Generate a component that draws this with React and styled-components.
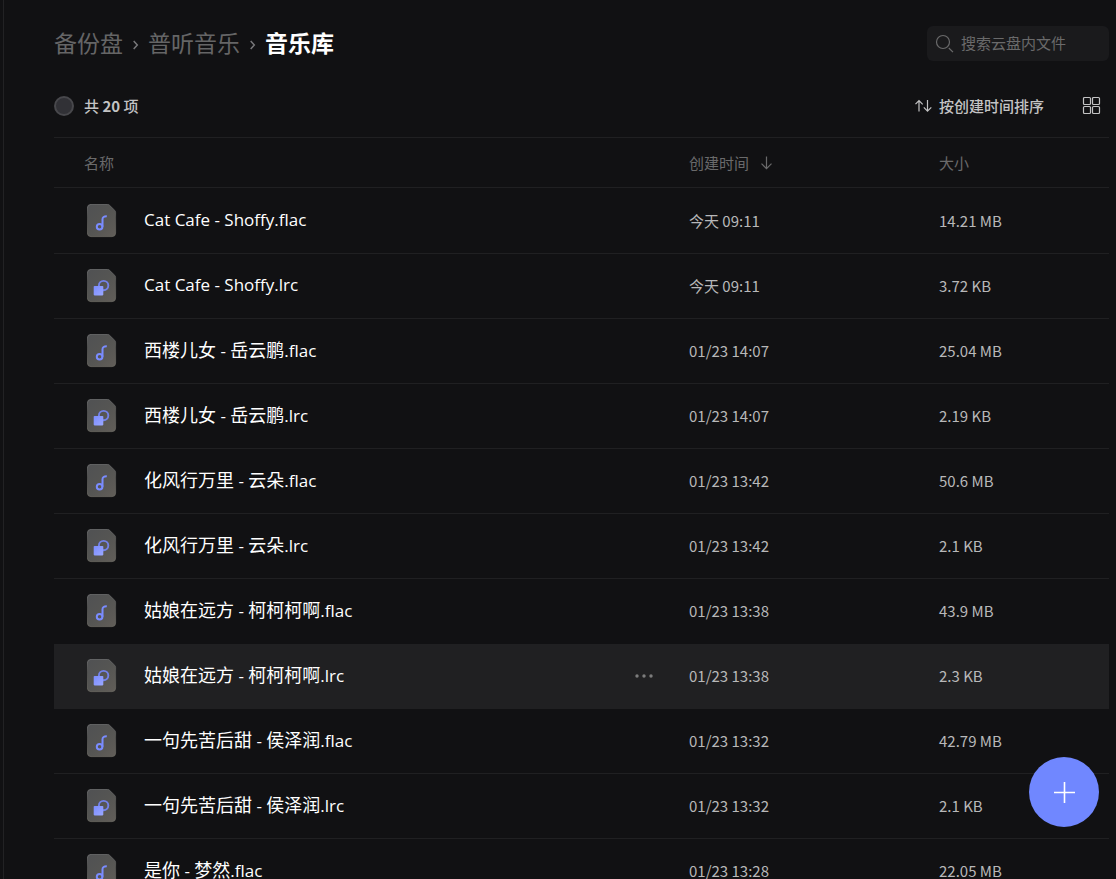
import React from "react";
import styled, { createGlobalStyle } from "styled-components";

const GlobalStyle = createGlobalStyle`
  *, *::before, *::after { box-sizing: border-box; }
  body {
    margin: 0;
    background: #111113;
    color: #fff;
    font-family: "Noto Sans CJK SC", sans-serif;
    font-size: 15px;
    overflow: hidden;
  }
  button, input { font: inherit; color: inherit; }
  button { padding: 0; border: 0; background: none; cursor: pointer; }
`;

const Page = styled.main`
  height: 100vh;
  margin-left: 3px;
  padding: 26px 7px 0 50px;
  border-left: 1px solid #222224;
  overflow: hidden;
`;

const Header = styled.header`
  display: flex;
  align-items: center;
  justify-content: space-between;
  height: 35px;
`;

const Breadcrumb = styled.nav`
  display: flex;
  align-items: center;
  gap: 8px;
  padding-bottom: 4px;
  font-size: 23px;
  line-height: 34px;
  color: #656566;
`;

const Crumb = styled.a`
  color: ${(p) => (p.$current ? "#fff" : "inherit")};
  font-weight: ${(p) => (p.$current ? 700 : 400)};
  text-decoration: none;
`;

const Chevron = styled.svg`
  width: 9px;
  height: 12px;
  margin-top: 6px;
`;

const SearchBox = styled.label`
  display: flex;
  align-items: center;
  gap: 6px;
  width: 182px;
  height: 35px;
  padding: 0 8px;
  border-radius: 6px;
  background: #1a1a1c;
  color: #6a6a6b;
`;

const SearchInput = styled.input`
  flex: 1;
  min-width: 0;
  padding: 0 0 2px;
  border: 0;
  outline: 0;
  background: none;
  &::placeholder { color: #6a6a6b; opacity: 1; }
`;

const Toolbar = styled.div`
  display: flex;
  align-items: center;
  height: 62px;
  margin-top: 14px;
  color: #c3c3c4;
`;

const ToolbarText = styled.span`
  padding-bottom: 2px;
  font-weight: 500;
  b { font-weight: 700; }
`;

const SelectAll = styled.label`
  display: flex;
  align-items: center;
  gap: 10px;
`;

const RoundCheck = styled.input`
  appearance: none;
  width: 20px;
  height: 20px;
  margin: 0;
  border: 2px solid #48484c;
  border-radius: 50%;
  background: #313136;
`;

const SortButton = styled.button`
  display: flex;
  align-items: center;
  gap: 6px;
  margin: 0 38px 0 auto;
`;

const ViewButton = styled.button`
  display: flex;
  margin-right: 8px;
  padding-bottom: 2px;
`;

const Table = styled.table`
  width: 100%;
  table-layout: fixed;
  border-collapse: separate;
  border-spacing: 0;
  border-top: 1px solid #202022;
`;

const HeadCell = styled.th`
  width: ${(p) => p.$width || "auto"};
  height: 50px;
  padding: 0 0 0 ${(p) => p.$indent || "0"};
  border-bottom: 1px solid #202022;
  color: #6a6a6b;
  font-weight: 400;
  text-align: left;
`;

const SortHeader = styled.button`
  display: flex;
  align-items: center;
  gap: 11px;
`;

const Row = styled.tr`
  background: ${(p) => (p.$active ? "#202022" : "transparent")};
  > td { border-bottom: 1px solid ${(p) => (p.$plain ? "transparent" : "#202022")}; }
`;

const Cell = styled.td`
  height: 65px;
  padding: 0 0 2px;
  color: #b8b8b9;
  white-space: nowrap;
`;

const NameCell = styled(Cell)`
  padding: 0 35px 0 33px;
`;

const NameLine = styled.div`
  display: flex;
  align-items: center;
`;

const FileName = styled.a`
  margin-left: 27px;
  padding-bottom: 2px;
  color: #fff;
  font-family: "Open Sans", "Noto Sans CJK SC", sans-serif;
  font-size: 17px;
  line-height: 26px;
  text-decoration: none;
`;

const Han = styled.span`
  font-size: 18px;
`;

const MoreButton = styled.button`
  display: flex;
  margin-left: auto;
  color: #7c7c7d;
`;

const TableBody = styled.tbody`
  &::before { content: ""; display: table-row; height: 1px; }
`;

const AddButton = styled.button`
  position: fixed;
  right: 17px;
  bottom: 52px;
  display: flex;
  align-items: center;
  justify-content: center;
  width: 70px;
  height: 70px;
  border-radius: 50%;
  background: #7087ff;
`;

const FileSvg = styled.svg`
  flex: none;
  width: 30px;
  height: 34px;
`;

const files = [
  ["Cat Cafe - Shoffy.flac", "今天 09:11", "14.21 MB"],
  ["Cat Cafe - Shoffy.lrc", "今天 09:11", "3.72 KB"],
  ["西楼儿女 - 岳云鹏.flac", "01/23 14:07", "25.04 MB"],
  ["西楼儿女 - 岳云鹏.lrc", "01/23 14:07", "2.19 KB"],
  ["化风行万里 - 云朵.flac", "01/23 13:42", "50.6 MB"],
  ["化风行万里 - 云朵.lrc", "01/23 13:42", "2.1 KB"],
  ["姑娘在远方 - 柯柯柯啊.flac", "01/23 13:38", "43.9 MB"],
  ["姑娘在远方 - 柯柯柯啊.lrc", "01/23 13:38", "2.3 KB"],
  ["一句先苦后甜 - 侯泽润.flac", "01/23 13:32", "42.79 MB"],
  ["一句先苦后甜 - 侯泽润.lrc", "01/23 13:32", "2.1 KB"],
  ["是你 - 梦然.flac", "01/23 13:28", "22.05 MB"],
];
const activeIndex = 7;

// Han characters are set one size larger than the Latin ones beside them.
function MixedText({ children }) {
  return children
    .split(/(\p{Script=Han}+)/u)
    .map((run, i) => (i % 2 ? <Han key={i}>{run}</Han> : run));
}

function Separator() {
  return (
    <Chevron viewBox="0 0 9 12" fill="none" stroke="#77777a" strokeWidth="1.5" aria-hidden="true">
      <path d="M2.700 2 6.300 6 2.700 10" />
    </Chevron>
  );
}

function IconDefs() {
  return (
    <svg width="0" height="0" aria-hidden="true">
      <defs>
        <linearGradient id="sheet" x1="0" y1="0" x2="1" y2="1">
          <stop offset="0" stopColor="#505153" />
          <stop offset="0.5" stopColor="#555553" />
          <stop offset="1" stopColor="#625e59" />
        </linearGradient>
        <linearGradient id="sheetEdge" x1="0" y1="0" x2="0" y2="1">
          <stop offset="0" stopColor="#737475" />
          <stop offset="0.4" stopColor="#555553" />
          <stop offset="1" stopColor="#6b6962" />
        </linearGradient>
        <linearGradient id="square" x1="0" y1="0" x2="1" y2="1">
          <stop offset="0" stopColor="#7c8cff" />
          <stop offset="1" stopColor="#9aa8ff" />
        </linearGradient>
      </defs>
    </svg>
  );
}

function FileIcon({ audio }) {
  return (
    <FileSvg viewBox="0 0 30 34" fill="none" aria-hidden="true">
      <path
        d="M4 .4H20.500q1.100 0 1.900.8l5.400 5.200q.8.8.8 2V29q0 3.600-3.600 3.600H4Q.4 32.600.4 29V4Q.4.4 4 .4Z"
        fill="url(#sheet)"
        stroke="url(#sheetEdge)"
        strokeWidth="0.8"
      />
      {audio ? (
        <g stroke="#7a8cff" strokeWidth="2">
          <circle cx="12.600" cy="22.800" r="2.800" />
          <path d="M15.500 22.800V15.200q0-3 4.300-2.900" />
        </g>
      ) : (
        <g>
          <circle cx="16.600" cy="16.600" r="4.700" stroke="#7482e8" strokeWidth="1.900" />
          <rect x="6.700" y="17" width="9.600" height="9.400" rx="0.800" fill="url(#square)" />
        </g>
      )}
    </FileSvg>
  );
}

export default function App() {
  return (
    <>
      <GlobalStyle />
      <Page>
        <Header>
          <Breadcrumb aria-label="路径">
            <Crumb href="#backup">备份盘</Crumb>
            <Separator />
            <Crumb href="#music">普听音乐</Crumb>
            <Separator />
            <Crumb href="#library" $current aria-current="page">音乐库</Crumb>
          </Breadcrumb>
          <SearchBox>
            <svg width="20" height="20" viewBox="0 0 20 20" fill="none" stroke="currentColor" strokeWidth="1.2" aria-hidden="true">
              <circle cx="8" cy="8" r="6.500" />
              <path d="m13.800 14 4.200 4.200" />
            </svg>
            <SearchInput type="search" placeholder="搜索云盘内文件" aria-label="搜索云盘内文件" />
          </SearchBox>
        </Header>

        <Toolbar>
          <SelectAll>
            <RoundCheck type="checkbox" />
            <ToolbarText>共 <b>20</b> 项</ToolbarText>
          </SelectAll>
          <SortButton type="button">
            <svg width="18" height="14" viewBox="0 0 18 14" fill="none" stroke="currentColor" strokeWidth="1.2" aria-hidden="true">
              <path d="M4 12.500V1.500M.5 5.200 4 1.500l3.700 3.800M12.500 1v11.200M8.800 8.400l3.700 3.800 3.800-3.800" />
            </svg>
            <ToolbarText>按创建时间排序</ToolbarText>
          </SortButton>
          <ViewButton type="button" aria-label="网格视图">
            <svg width="19" height="19" viewBox="0 0 19 19" fill="none" stroke="currentColor" strokeWidth="1.200" aria-hidden="true">
              <rect x="1.500" y="1.500" width="7" height="7" rx="1" />
              <rect x="10.500" y="1.500" width="7" height="7" rx="1" />
              <rect x="1.500" y="10.500" width="7" height="7" rx="1" />
              <rect x="10.500" y="10.500" width="7" height="7" rx="1" />
            </svg>
          </ViewButton>
        </Toolbar>

        <Table>
          <thead>
            <tr>
              <HeadCell scope="col" $indent="30px">名称</HeadCell>
              <HeadCell scope="col" $width="250px">
                <SortHeader type="button">
                  创建时间
                  <svg width="13" height="14" viewBox="0 0 13 14" fill="none" stroke="currentColor" strokeWidth="1.200" aria-hidden="true">
                    <path d="M6.500.5v12.200M1.500 7.700l5 5 5-5" />
                  </svg>
                </SortHeader>
              </HeadCell>
              <HeadCell scope="col" $width="170px">大小</HeadCell>
            </tr>
          </thead>
          <TableBody>
            {files.map(([name, time, size], i) => (
              <Row key={name} $active={i === activeIndex} $plain={i === activeIndex || i === activeIndex - 1}>
                <NameCell>
                  <NameLine>
                    <FileIcon audio={name.endsWith(".flac")} />
                    <FileName href="#file"><MixedText>{name}</MixedText></FileName>
                    {i === activeIndex && (
                      <MoreButton type="button" aria-label="更多">
                        <svg width="20" height="6" viewBox="0 0 20 6" fill="currentColor" aria-hidden="true">
                          <circle cx="3" cy="3" r="1.700" />
                          <circle cx="10" cy="3" r="1.700" />
                          <circle cx="17" cy="3" r="1.700" />
                        </svg>
                      </MoreButton>
                    )}
                  </NameLine>
                </NameCell>
                <Cell>{time}</Cell>
                <Cell>{size}</Cell>
              </Row>
            ))}
          </TableBody>
        </Table>
      </Page>
      <AddButton type="button" aria-label="添加">
        <svg width="22" height="22" viewBox="0 0 22 22" stroke="#fff" strokeWidth="1.600" aria-hidden="true">
          <path d="M11.500 1v21M1 11.500h21" />
        </svg>
      </AddButton>
      <IconDefs />
    </>
  );
}
